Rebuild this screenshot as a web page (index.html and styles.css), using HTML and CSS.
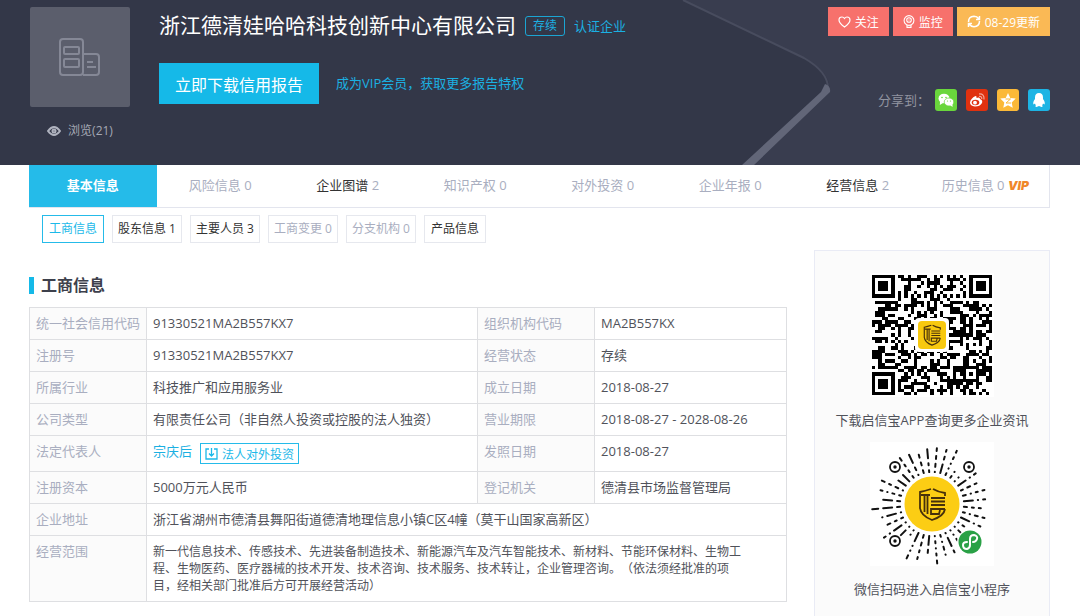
FILE: index.html
```html
<!DOCTYPE html>
<html lang="zh-CN">
<head>
    <meta charset="UTF-8">
    <meta name="viewport" content="width=device-width, initial-scale=1.0">
    <title>浙江德清娃哈哈科技创新中心有限公司</title>
    <link rel="stylesheet" href="styles.css">
</head>
<body>
    <!-- Company Header -->
    <header class="header">
        <svg class="header-art" viewBox="0 0 420 165" aria-hidden="true">
            <path d="M23 0L144 58Q172 74 169 90L88 165H420V0z" fill="#393d4f"/>
            <path d="M23 0L144 58Q168 72 168 88" fill="none" stroke="#484c5e" stroke-width="2"/>
            <path d="M165 84Q171 86 170 92L94 165H82L161 92z" fill="#626678"/>
        </svg>

        <div class="company-logo">
            <div class="logo-box">
                <svg width="44" height="40" viewBox="0 0 44 40" fill="none" stroke="#858896" stroke-width="2">
                    <rect x="2" y="2" width="23" height="36" rx="3"/>
                    <rect x="6" y="10" width="15" height="7" rx="1"/>
                    <rect x="6" y="22" width="15" height="8" rx="1"/>
                    <path d="M25 17h13q3 0 3 3v15q0 3-3 3H25M29 25h6M29 30h9"/>
                </svg>
            </div>
            <div class="views">
                <svg width="14" height="10" viewBox="0 0 14 10" fill="none" stroke="#b0b3bf" stroke-width="2">
                    <path d="M1 5Q7-3 13 5Q7 13 1 5z"/>
                    <circle cx="7" cy="5" r="1.5"/>
                </svg>
                <span>浏览(21)</span>
            </div>
        </div>

        <div class="company-main">
            <div class="title-row">
                <h1>浙江德清娃哈哈科技创新中心有限公司</h1>
                <span class="badge">存续</span>
                <a href="#" class="verify">认证企业</a>
            </div>
            <div class="report-row">
                <button type="button" class="report-btn">立即下载信用报告</button>
                <a href="#">成为VIP会员，获取更多报告特权</a>
            </div>
        </div>

        <div class="company-side">
            <div class="actions">
                <button type="button" class="follow">
                    <svg width="13" height="12" viewBox="0 0 13 12" fill="none" stroke="#fff" stroke-width="1.2"><path d="M6.500 11Q1 7 1 4Q1 1 4 1Q5.500 1 6.500 2.500Q7.500 1 9 1Q12 1 12 4Q12 7 6.500 11z"/></svg>
                    关注
                </button>
                <button type="button" class="monitor">
                    <svg width="12" height="13" viewBox="0 0 12 13" fill="none" stroke="#fff" stroke-width="1.1"><circle cx="6" cy="5.500" r="4.900"/><circle cx="6" cy="5" r="2.300"/><path d="M6 4.500v1M4 10v2.400h4V10"/></svg>
                    监控
                </button>
                <button type="button" class="update">
                    <svg width="14" height="13" viewBox="0 0 14 13" fill="none" stroke="#fff" stroke-width="1.500"><path d="M1.500 7Q1.500 1.500 7 1.300Q10 1.300 12 4M12.500 1v3.500H9M12.500 6Q12.500 11.500 7 11.700Q4 11.700 2 9M1.500 12V8.500H5"/></svg>
                    08-29更新
                </button>
            </div>
            <div class="share">
                <span>分享到：</span>
                <a href="#" class="wechat" aria-label="微信">
                    <svg width="16" height="14" viewBox="0 0 16 14"><ellipse cx="6" cy="5.500" rx="5.500" ry="4.800" fill="#fff"/><path d="M2 8.500L1.800 12L5 10z" fill="#fff"/><ellipse cx="11" cy="9" rx="4.800" ry="4" fill="#fff" stroke="#69d63c" stroke-width=".7"/><path d="M12 12l2.500 2v-3z" fill="#fff"/><g fill="#69d63c"><circle cx="4" cy="4.500" r=".8"/><circle cx="8" cy="4.500" r=".8"/><circle cx="9.500" cy="8" r=".6"/><circle cx="12.500" cy="8" r=".6"/></g></svg>
                </a>
                <a href="#" class="weibo" aria-label="微博">
                    <svg width="16" height="14" viewBox="0 0 16 14"><path d="M6.500 3Q8 3 7.500 5Q11 3.500 11 6Q14 7 13 10Q11 13.500 6 13.500Q1 13 1 9.500Q1.500 5.500 6.500 3z" fill="#fff"/><ellipse cx="6.500" cy="9.500" rx="3.800" ry="2.800" fill="#e0310f"/><circle cx="6" cy="9.700" r="1.900" fill="#fff"/><path d="M10 3.500Q13 3 12.800 6M10 1Q15.500.5 15 6.500" fill="none" stroke="#f5a999" stroke-width="1.200"/></svg>
                </a>
                <a href="#" class="qzone" aria-label="QQ空间">
                    <svg width="16" height="15" viewBox="0 0 16 15"><path d="M8 0l2.300 4.900 5.400.7-4 3.800 1 5.400L8 12.200l-4.700 2.600 1-5.400-4-3.800 5.400-.7z" fill="#fff"/><path d="M5.500 6h5L6 10h5" fill="none" stroke="#fbb938"/></svg>
                </a>
                <a href="#" class="qq" aria-label="QQ">
                    <svg width="14" height="14" viewBox="0 0 14 14"><path d="M7 0Q11 0 11 4.500V6Q13.500 9 12.500 11.500L11 10.500Q11 11.500 10 12Q11.500 13.500 9.500 14L7 13L4.500 14Q2.500 13.500 4 12Q3 11.500 3 10.500L1.500 11.500Q.5 9 3 6V4.500Q3 0 7 0z" fill="#fff"/></svg>
                </a>
            </div>
        </div>
    </header>

    <div class="container">
        <!-- Main Tabs -->
        <nav class="tabs">
            <a href="#" class="active">基本信息</a>
            <a href="#">风险信息 0</a>
            <a href="#"><b>企业图谱</b> 2</a>
            <a href="#">知识产权 0</a>
            <a href="#">对外投资 0</a>
            <a href="#">企业年报 0</a>
            <a href="#"><b>经营信息</b> 2</a>
            <a href="#">历史信息 0 <em>VIP</em></a>
        </nav>

        <!-- Sub Tabs -->
        <nav class="sub-tabs">
            <a href="#" class="active">工商信息</a>
            <a href="#">股东信息 1</a>
            <a href="#">主要人员 3</a>
            <a href="#" class="empty">工商变更 0</a>
            <a href="#" class="empty">分支机构 0</a>
            <a href="#">产品信息</a>
        </nav>

        <div class="content">
            <main>
                <h2>工商信息</h2>
                <table class="info-table">
                    <colgroup>
                        <col class="col-label">
                        <col>
                        <col class="col-label">
                        <col class="col-last">
                    </colgroup>
                    <tbody>
                        <tr>
                            <th>统一社会信用代码</th>
                            <td>91330521MA2B557KX7</td>
                            <th>组织机构代码</th>
                            <td>MA2B557KX</td>
                        </tr>
                        <tr>
                            <th>注册号</th>
                            <td>91330521MA2B557KX7</td>
                            <th>经营状态</th>
                            <td>存续</td>
                        </tr>
                        <tr>
                            <th>所属行业</th>
                            <td>科技推广和应用服务业</td>
                            <th>成立日期</th>
                            <td>2018-08-27</td>
                        </tr>
                        <tr>
                            <th>公司类型</th>
                            <td>有限责任公司（非自然人投资或控股的法人独资）</td>
                            <th>营业期限</th>
                            <td>2018-08-27 - 2028-08-26</td>
                        </tr>
                        <tr>
                            <th>法定代表人</th>
                            <td>
                                <div class="person">
                                    <a href="#">宗庆后</a>
                                    <button type="button">
                                        <svg width="13" height="12" viewBox="0 0 13 12" fill="none" stroke="#1bb9e9" stroke-width="1.300"><path d="M4 1H1v10h11V1H9M6.500 0v8M4 5.500L6.500 8L9 5.500"/></svg>
                                        法人对外投资
                                    </button>
                                </div>
                            </td>
                            <th>发照日期</th>
                            <td>2018-08-27</td>
                        </tr>
                        <tr>
                            <th>注册资本</th>
                            <td>5000万元人民币</td>
                            <th>登记机关</th>
                            <td>德清县市场监督管理局</td>
                        </tr>
                        <tr>
                            <th>企业地址</th>
                            <td colspan="3">浙江省湖州市德清县舞阳街道德清地理信息小镇C区4幢（莫干山国家高新区）</td>
                        </tr>
                        <tr>
                            <th>经营范围</th>
                            <td colspan="3" class="scope">新一代信息技术、传感技术、先进装备制造技术、新能源汽车及汽车智能技术、新材料、节能环保材料、生物工程、生物医药、医疗器械的技术开发、技术咨询、技术服务、技术转让，企业管理咨询。（依法须经批准的项目，经相关部门批准后方可开展经营活动）</td>
                        </tr>
                    </tbody>
                </table>
            </main>

            <!-- QR Codes -->
            <aside class="sidebar">
                <svg class="code" viewBox="-2 -2 124 124" role="img" aria-label="启信宝APP">
                    <rect x="-2" y="-2" width="124" height="124" fill="#fff"/>
                    <path id="qr-modules" transform="scale(3.243)" shape-rendering="crispEdges"/>
                    <rect x="43" y="43" width="34" height="34" rx="4" fill="#fff"/>
                    <rect x="46" y="46" width="28" height="28" rx="4" fill="#f8c90f"/>
                    <use href="#shield" transform="translate(51 49) scale(.64)"/>
                </svg>
                <p>下载启信宝APP查询更多企业资讯</p>
                <svg class="code" viewBox="-62 -62 124 124" role="img" aria-label="启信宝小程序">
                    <rect x="-62" y="-62" width="124" height="124" fill="#fff"/>
                    <path id="mini-rays" stroke="#111" stroke-width="2" stroke-linecap="round"/>
                    <g fill="#fff" stroke="#111" stroke-width="1.800">
                        <circle cx="-37" cy="-37" r="5"/>
                        <circle cx="37" cy="-37" r="5"/>
                        <circle cx="-37" cy="37" r="5"/>
                    </g>
                    <g fill="#111">
                        <circle cx="-37" cy="-37" r="1.700"/>
                        <circle cx="37" cy="-37" r="1.700"/>
                        <circle cx="-37" cy="37" r="1.700"/>
                    </g>
                    <circle r="27.500" fill="#fccd14"/>
                    <g transform="translate(-14 -17)">
                        <g id="shield" fill="none" stroke="#47300b" stroke-width="1.800">
                            <path d="M13 2Q7 4 2 5V21Q3 29 14 33Q26 29 27 22M15 2Q20 5 27 6V9"/>
                            <path d="M3 8h9M6.500 8v17M9.500 8v19M13 11h14M13 14.500h14M13 18h14M27 22H13v5h8l1-4"/>
                        </g>
                    </g>
                    <circle cx="38" cy="38" r="13" fill="#fff"/>
                    <circle cx="38" cy="38" r="11.500" fill="#2aa146"/>
                    <path d="M35 38Q31 38 31 41Q31 45 35 45Q38 44 38 41V35Q38 31 42 31Q46 32 45 35Q44 38 41 38" fill="none" stroke="#fff" stroke-width="2" stroke-linecap="round"/>
                </svg>
                <p>微信扫码进入启信宝小程序</p>
            </aside>
        </div>
    </div>

    <script src="codes.js"></script>
</body>
</html>
```
FILE: styles.css
```css
* {
    box-sizing: border-box;
}

body {
    display: flex;
    flex-direction: column;
    min-height: 100vh;
    margin: 0;
    font-family: "Open Sans", "Noto Sans CJK SC", sans-serif;
    font-size: 13px;
    line-height: 17px;
    color: #50525a;
    background-color: #fff;
}

a {
    color: #1bb0e2;
    text-decoration: none;
}

button {
    font-family: inherit;
    font-size: 12px;
    padding: 0;
    border: none;
    cursor: pointer;
}

svg {
    flex: none;
}

/* header */
.header {
    position: relative;
    display: flex;
    height: 165px;
    padding: 7px 30px 0 30px;
    background-color: #333748;
}

.header-art {
    position: absolute;
    top: 0;
    right: 0;
    width: 420px;
    height: 165px;
}

.company-logo {
    width: 100px;
    margin-right: 29px;
}

.logo-box {
    display: flex;
    align-items: center;
    justify-content: center;
    height: 100px;
    border-radius: 2px;
    background-color: #5b5e6c;
}

.views {
    display: flex;
    align-items: center;
    justify-content: center;
    gap: 7px;
    margin-top: 15px;
    font-size: 12px;
    color: #a5a8b4;
}

.company-main {
    flex: 1;
}

.title-row {
    display: flex;
    align-items: center;
    height: 36px;
}

h1 {
    margin: 0;
    font-size: 21px;
    font-weight: normal;
    line-height: 34px;
    color: #fff;
    white-space: nowrap;
}

.badge {
    height: 20px;
    margin: 2px 9px 0 9px;
    padding: 0 7px;
    border: 1px solid #1ba5d3;
    border-radius: 3px;
    font-size: 12px;
    line-height: 18px;
    color: #1bb0e2;
    white-space: nowrap;
}

.verify {
    margin-top: 2px;
    white-space: nowrap;
}

.report-row {
    display: flex;
    align-items: center;
    gap: 17px;
    margin-top: 20px;
}

.report-btn {
    width: 160px;
    height: 41px;
    font-size: 16px;
    color: #fff;
    background-color: #15b9e8;
}

.company-side {
    position: relative;
    display: flex;
    flex-direction: column;
    align-items: flex-end;
}

.actions {
    display: flex;
    gap: 4px;
}

.actions button {
    display: flex;
    align-items: center;
    justify-content: center;
    gap: 4px;
    height: 29px;
    padding: 0 10px;
    color: #fff;
    background-color: #f7716c;
}

.actions .update {
    background-color: #fab955;
}

.share {
    display: flex;
    align-items: center;
    gap: 9px;
    margin-top: 53px;
    color: #9194a0;
}

.share span {
    margin-right: -4px;
}

.share a {
    display: flex;
    align-items: center;
    justify-content: center;
    width: 22px;
    height: 22px;
    border-radius: 3px;
}

.share .wechat {
    background-color: #69d63c;
}

.share .weibo {
    background-color: #e0310f;
}

.share .qzone {
    background-color: #fbb938;
}

.share .qq {
    background-color: #1db4e4;
}

/* tabs */
.container {
    display: flex;
    flex: 1;
    flex-direction: column;
    padding: 0 30px 0 29px;
}

.tabs {
    display: grid;
    grid-template-columns: repeat(8, 1fr);
    height: 43px;
    border-right: 1px solid #e3e5ee;
    border-bottom: 1px solid #e3e5ee;
}

.tabs a {
    line-height: 41px;
    text-align: center;
    white-space: nowrap;
    color: #a9aec0;
}

.tabs b {
    font-weight: normal;
    color: #333;
}

.tabs em {
    font-family: Inter, sans-serif;
    font-size: 12px;
    font-weight: 900;
    color: #f0862a;
}

.tabs .active {
    font-weight: bold;
    color: #fff;
    background-color: #25bbe9;
}

.sub-tabs {
    display: flex;
    gap: 8px;
    padding: 7px 13px;
}

.sub-tabs a {
    min-width: 62px;
    height: 28px;
    padding: 0 5px;
    border: 1px solid #e6e8ee;
    font-size: 12px;
    line-height: 26px;
    text-align: center;
    color: #333;
}

.sub-tabs .empty {
    color: #a9aec0;
}

.sub-tabs .active {
    border-color: #25bbe9;
    color: #1bb9e9;
}

/* content */
.content {
    display: grid;
    flex: 1;
    grid-template-columns: 1fr 236px;
    gap: 27px;
}

h2 {
    margin: 27px 0 13px;
    padding-left: 7px;
    border-left: 5px solid #15b9e8;
    font-size: 16px;
    line-height: 17px;
    color: #3d404c;
}

.info-table {
    width: 100%;
    table-layout: fixed;
    border-collapse: collapse;
}

.info-table th, .info-table td {
    padding: 7px 6px;
    border: 1px solid #dedfe2;
    text-align: left;
    vertical-align: top;
    font-weight: normal;
}

.info-table th {
    color: #a9aec0;
    background-color: #fbfbfb;
    white-space: nowrap;
}

.col-label {
    width: 117px;
}

.col-last {
    width: 192px;
}

.info-table .scope {
    padding-right: 38px;
    font-size: 12px;
    text-spacing-trim: space-all;
}

.person {
    display: flex;
    gap: 8px;
}

.person button {
    display: flex;
    align-items: center;
    gap: 4px;
    height: 21px;
    padding: 0 4px;
    border: 1px solid #25bbe9;
    color: #1bb9e9;
    background-color: #fff;
}

/* sidebar */
.sidebar {
    display: flex;
    flex-direction: column;
    align-items: center;
    padding-top: 22px;
    border: 1px solid #e9ebf5;
    border-bottom: none;
    background-color: #fbfbfb;
}

.sidebar p {
    margin: 15px 0 13px;
}

.code {
    width: 124px;
    height: 124px;
}
```
FILE: codes.js
```js
// Small fixed-seed generator so the codes always look the same
let seed = 557;
function random() {
    seed = (seed * 16807) % 2147483647;
    return seed / 2147483647;
}

// Square code, 37 x 37 modules
const SIZE = 37;

function square(x, y, cx, cy, radius) {
    const d = Math.max(Math.abs(x - cx), Math.abs(y - cy));
    if (d > radius) return null;
    return d;
}

function moduleAt(x, y) {
    for (const [cx, cy] of [[3, 3], [33, 3], [3, 33]]) {
        const d = square(x, y, cx, cy, 4);
        if (d !== null) return d !== 2 && d !== 4;
    }
    const a = square(x, y, 30, 30, 2);
    if (a !== null) return a !== 1;
    if (x === 6 || y === 6) return (x + y) % 2 === 0;
    return random() < 0.5;
}

let modules = "";
for (let y = 0; y < SIZE; y++) {
    for (let x = 0; x < SIZE; x++) {
        if (moduleAt(x, y)) modules += `M${x} ${y}h1v1h-1z`;
    }
}
document.getElementById("qr-modules").setAttribute("d", modules);

// Round code, rays of dots and dashes around the logo
const RAYS = 36;
const DASHES = [0.3, 0.3, 2, 2, 3, 9];
let rays = "";
for (let i = 0; i < RAYS; i++) {
    const angle = (i * 10 - 85) * Math.PI / 180;
    const diagonal = i % 9 === 4 || i % 9 === 3;
    const end = diagonal ? 42 : 54 + (i % 3) * 2;
    let r = 32;
    while (r < end) {
        const length = DASHES[Math.floor(random() * DASHES.length)];
        const to = Math.min(r + length, end + 2);
        rays += `M${Math.cos(angle) * r} ${Math.sin(angle) * r}L${Math.cos(angle) * to} ${Math.sin(angle) * to}`;
        r = to + 5;
    }
}
document.getElementById("mini-rays").setAttribute("d", rays);
```
